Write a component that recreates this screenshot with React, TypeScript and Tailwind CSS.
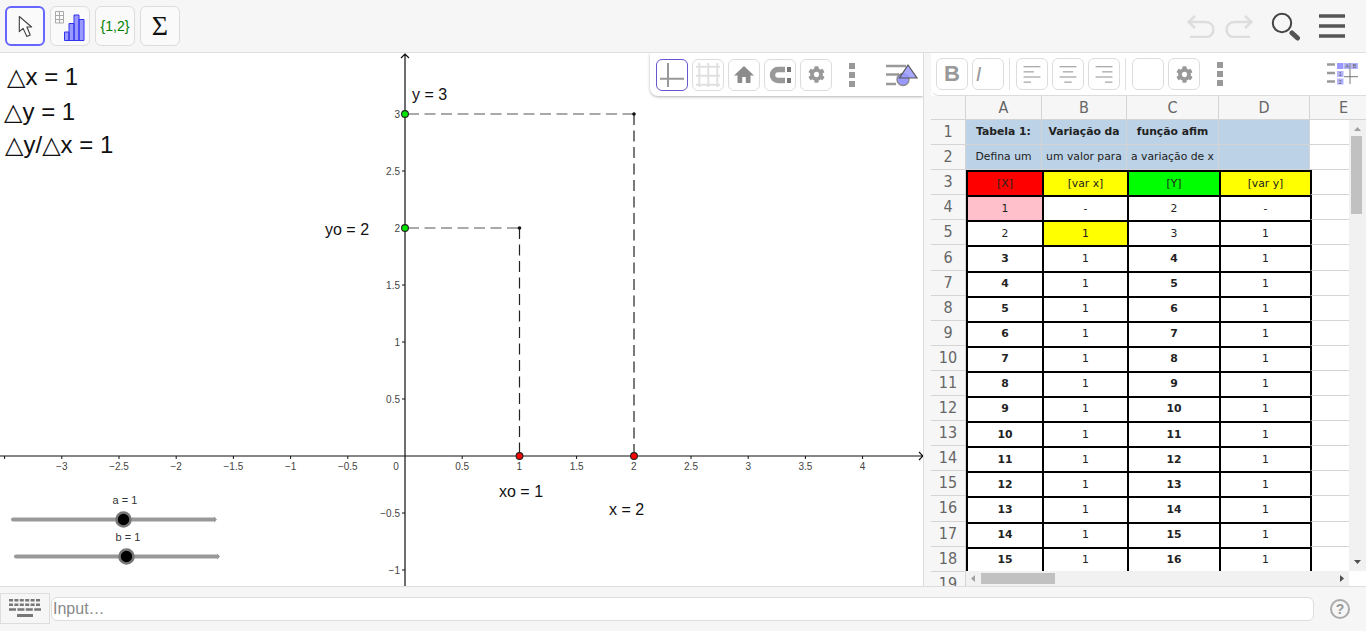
import { FaCog } from 'react-icons/fa';

const SANS = "[font-family:'Liberation_Sans',Arial,sans-serif]";

// spreadsheet rows 3..18, rows 6+ have the first and third column in bold
const rows: { a: string; b: string; c: string; d: string; bold?: boolean }[] = [
  { a: '1', b: '-', c: '2', d: '-' },
  { a: '2', b: '1', c: '3', d: '1' },
];
for (let n = 3; n <= 15; n++) {
  rows.push({ a: String(n), b: '1', c: String(n + 1), d: '1', bold: true });
}

function TopButton({ active, children }: { active?: boolean; children: React.ReactNode }) {
  return (
    <div
      className={
        active
          ? 'w-[40px] h-[40px] rounded-[6px] border-2 border-[#6666ff] bg-[#fafafa] flex items-center justify-center'
          : 'w-[40px] h-[40px] rounded-[6px] border border-[#dddddd] bg-[#fafafa] flex items-center justify-center'
      }
    >
      {children}
    </div>
  );
}

function StyleButton({ active, children }: { active?: boolean; children?: React.ReactNode }) {
  return (
    <div
      className={
        active
          ? 'w-[32px] h-[32px] shrink-0 rounded-[6px] border border-[#6557d2] bg-white flex items-center justify-center'
          : 'w-[32px] h-[32px] shrink-0 rounded-[6px] border border-[#dcdcdc] bg-white flex items-center justify-center'
      }
    >
      {children}
    </div>
  );
}

function Dots() {
  return (
    <div className="flex flex-col gap-[3px] w-[6px]">
      <div className="w-[6px] h-[6px] bg-[#999999]" />
      <div className="w-[6px] h-[6px] bg-[#999999]" />
      <div className="w-[6px] h-[6px] bg-[#999999]" />
    </div>
  );
}

function AlignIcon({ side }: { side: 'left' | 'center' | 'right' }) {
  const xs = (w: number) => (side === 'left' ? 7 : side === 'center' ? 16 - w / 2 : 25 - w);
  return (
    <svg width="32" height="32" viewBox="0 0 32 32">
      {[
        [7.5, 18],
        [13, 11],
        [18.5, 18],
        [24, 8],
      ].map(([y, w]) => (
        <rect key={y} x={xs(w)} y={y} width={w} height="1.4" fill="#aaaaaa" />
      ))}
    </svg>
  );
}

function GraphView() {
  const xTicks = [-3.5, -3, -2.5, -2, -1.5, -1, -0.5, 0.5, 1, 1.5, 2, 2.5, 3, 3.5, 4];
  const yTicks = [3, 2.5, 2, 1.5, 1, 0.5, -0.5, -1];
  const px = (v: number) => 405 + v * 114.4;
  const py = (v: number) => 456 - v * 114;
  const fmt = (v: number) => (v < 0 ? '\u2212' + Math.abs(v) : String(v));
  return (
    <svg width="923" height="533" viewBox="0 53 923 533" className={SANS}>
      {/* axes */}
      <path d="M0 456 H923 M919 452 L923 456 L919 460" fill="none" stroke="#111" strokeWidth="1.2" />
      <path d="M405 586 V54 M401 58 L405 54 L409 58" fill="none" stroke="#111" strokeWidth="1.2" />
      {xTicks.map((v) => (
        <line key={v} x1={px(v)} x2={px(v)} y1="456" y2="459" stroke="#111" />
      ))}
      {yTicks.map((v) => (
        <line key={v} x1="402" x2="405" y1={py(v)} y2={py(v)} stroke="#111" />
      ))}
      {xTicks
        .filter((v) => v !== -3.5)
        .map((v) => (
          <text key={v} x={px(v)} y="470" fontSize="10" fill="#444" textAnchor="middle">
            {fmt(v)}
          </text>
        ))}
      <text x="396" y="470" fontSize="10" fill="#444" textAnchor="middle">
        0
      </text>
      {yTicks.map((v) => (
        <text key={v} x="400" y={py(v) + 3.5} fontSize="10" fill="#444" textAnchor="end">
          {fmt(v)}
        </text>
      ))}

      {/* guide lines */}
      <g fill="none" strokeWidth="1.2" strokeDasharray="11 5.5">
        <path d="M408 114 H634" stroke="#555" />
        <path d="M408 228 H519.5" stroke="#555" />
        <path d="M634 114 V456" stroke="#222" />
        <path d="M519.5 228 V456" stroke="#222" />
      </g>
      <circle cx="634" cy="114" r="1.8" fill="#111" />
      <circle cx="519.5" cy="228" r="1.8" fill="#111" />

      {/* points */}
      <circle cx="405" cy="114" r="3.4" fill="#00e600" stroke="#222" strokeWidth="1.1" />
      <circle cx="405" cy="228" r="3.4" fill="#00e600" stroke="#222" strokeWidth="1.1" />
      <circle cx="519.5" cy="456" r="3.4" fill="#ff0000" stroke="#222" strokeWidth="1.1" />
      <circle cx="634" cy="456" r="3.4" fill="#ff0000" stroke="#222" strokeWidth="1.1" />

      {/* labels */}
      <g fontSize="16" fill="#111">
        <text x="412" y="100">y = 3</text>
        <text x="325" y="235">yo = 2</text>
        <text x="499" y="497">xo = 1</text>
        <text x="609" y="515">x = 2</text>
      </g>
      <g fontSize="24" fill="#111" className="[font-family:'Liberation_Sans','DejaVu_Sans',sans-serif]">
        <text x="7" y="85">△x = 1</text>
        <text x="4" y="120">△y = 1</text>
        <text x="5" y="153">△y/△x = 1</text>
      </g>

      {/* sliders */}
      <g>
        <text x="125" y="504" fontSize="11" fill="#333" textAnchor="middle">a = 1</text>
        <path d="M13 519.5 H214" stroke="#999" strokeWidth="4" strokeLinecap="round" />
        <path d="M214 516.5 L217 519.5 L214 522.5Z" fill="#999" />
        <circle cx="123.5" cy="519.5" r="7" fill="#000" stroke="#777" strokeWidth="2.6" />
        <text x="128" y="541" fontSize="11" fill="#333" textAnchor="middle">b = 1</text>
        <path d="M16 556.5 H217" stroke="#999" strokeWidth="4" strokeLinecap="round" />
        <path d="M217 553.5 L220 556.5 L217 559.5Z" fill="#999" />
        <circle cx="126.5" cy="556.5" r="7" fill="#000" stroke="#777" strokeWidth="2.6" />
      </g>
    </svg>
  );
}

function Spreadsheet() {
  const head =
    "flex items-center justify-center border-r border-b border-[#d4d4d4] bg-[#f6f6f6] text-[#666666] text-[16px] [font-family:'DejaVu_Sans_Condensed','DejaVu_Sans',sans-serif]";
  const light = 'flex items-center justify-center border-r border-b border-[#d4d4d4] text-[10.8px] text-[#222222]';
  const thick = 'flex items-center justify-center border-l-2 border-t-2 border-black text-[10.8px] text-[#222222]';
  const blue = 'bg-[#bcd2e6]';
  return (
    <div className="relative flex-1 overflow-hidden [font-family:'DejaVu_Sans',sans-serif]">
      <div className="grid grid-cols-[35px_76px_85px_92px_91px_68px] grid-rows-[24px] auto-rows-[25.1px]">
        <div className={head} />
        {['A', 'B', 'C', 'D', 'E'].map((c) => (
          <div key={c} className={head}>
            {c}
          </div>
        ))}

        <div className={head}>1</div>
        <div className={`${light} ${blue} font-bold`}>Tabela 1:</div>
        <div className={`${light} ${blue} font-bold`}>Variação da</div>
        <div className={`${light} ${blue} font-bold`}>função afim</div>
        <div className={`${light} ${blue}`} />
        <div className={light} />

        <div className={head}>2</div>
        <div className={`${light} ${blue}`}>Defina um</div>
        <div className={`${light} ${blue}`}>um valor para</div>
        <div className={`${light} ${blue}`}>a variação de x</div>
        <div className={`${light} ${blue}`} />
        <div className={light} />

        <div className={head}>3</div>
        <div className={`${thick} bg-[#ff0000]`}>[X]</div>
        <div className={`${thick} bg-[#ffff00]`}>[var x]</div>
        <div className={`${thick} bg-[#00ff00]`}>[Y]</div>
        <div className={`${thick} bg-[#ffff00]`}>[var y]</div>
        <div className="border-l-2 border-b border-l-black border-b-[#d4d4d4]" />

        {rows.map((r, i) => (
          <div key={i} className="contents">
            <div className={head}>{i + 4}</div>
            <div className={`${thick} ${i === 0 ? 'bg-[#ffc0cb]' : ''} ${r.bold ? 'font-bold' : ''}`}>{r.a}</div>
            <div className={`${thick} ${i === 1 ? 'bg-[#ffff00]' : ''}`}>{r.b}</div>
            <div className={`${thick} ${r.bold ? 'font-bold' : ''}`}>{r.c}</div>
            <div className={thick}>{r.d}</div>
            <div className="border-l-2 border-b border-l-black border-b-[#d4d4d4]" />
          </div>
        ))}
        <div className={head}>19</div>
      </div>

      {/* vertical scrollbar */}
      <div className="absolute right-0 top-[24px] w-[17px] h-[451px] bg-[#f1f1f1]">
        <svg className="absolute left-[4px] top-[6px]" width="9" height="6" viewBox="0 0 9 6">
          <path d="M4.5 1 L8 5 H1Z" fill="#a0a0a0" />
        </svg>
        <div className="absolute left-[2px] top-[16px] w-[11px] h-[78px] bg-[#c1c1c1]" />
        <svg className="absolute left-[4px] bottom-[6px]" width="9" height="6" viewBox="0 0 9 6">
          <path d="M1 1 H8 L4.5 5Z" fill="#505050" />
        </svg>
      </div>

      {/* horizontal scrollbar */}
      <div className="absolute left-[35px] top-[475px] w-[383px] h-[15px] bg-[#f1f1f1]">
        <svg className="absolute left-[4px] top-[4px]" width="6" height="7" viewBox="0 0 6 7">
          <path d="M5 0 V7 L1 3.5Z" fill="#a0a0a0" />
        </svg>
        <div className="absolute left-[15px] top-[2px] w-[74px] h-[11px] bg-[#c1c1c1]" />
        <svg className="absolute right-[4px] top-[4px]" width="6" height="7" viewBox="0 0 6 7">
          <path d="M1 0 V7 L5 3.5Z" fill="#505050" />
        </svg>
      </div>
      <div className="absolute left-[418px] top-[475px] w-[17px] h-[15px] bg-white" />
    </div>
  );
}

export default function App() {
  return (
    <div className="w-[1366px] h-[631px] overflow-hidden flex flex-col bg-[#f6f6f6]">
      {/* top toolbar */}
      <div className="h-[53px] shrink-0 flex items-center pl-[5px] pr-[21px] gap-[5px] border-b border-[#dedede] bg-[#f6f6f6]">
        <TopButton active>
          <svg width="38" height="38" viewBox="6 7 38 38">
            <path d="M19 16 V32 L23 28.5 L27 37 L30.5 35.5 L27 27 L32 27Z" fill="#fff" stroke="#444" strokeWidth="1.2" strokeLinejoin="round" />
          </svg>
        </TopButton>
        <TopButton>
          <svg width="38" height="38" viewBox="51 7 38 38">
            <path d="M55.5 11.5 H63.5 V23 H55.5Z M55.5 15.5 H63.5 M55.5 19.5 H63.5 M59.5 11.5 V23" fill="none" stroke="#aaa" />
            <path d="M64.5 32 H69 V40.5 H64.5Z M69 23.5 H74 V40.5 H69Z M74 15 H79 V40.5 H74Z M79 19.5 H84 V40.5 H79Z" fill="#9999ff" stroke="#3333ee" />
          </svg>
        </TopButton>
        <TopButton>
          <span className={`text-[14px] text-[#008000] ${SANS}`}>{'{1,2}'}</span>
        </TopButton>
        <TopButton>
          <span className="text-[28px] leading-none text-[#111] [font-family:'Liberation_Serif',serif]">Σ</span>
        </TopButton>
        <div className="ml-auto flex items-center">
          <svg width="28" height="24" viewBox="1187 15 28 24">
            <path d="M1195 17 L1188.5 23 L1195 29 M1188.5 23 H1206 a7.5 7.5 0 0 1 0 15 H1190" fill="none" stroke="#dddddd" strokeWidth="2.4" />
          </svg>
          <svg width="28" height="24" viewBox="1225 15 28 24" className="ml-[10px]">
            <path d="M1245 17 L1251.5 23 L1245 29 M1251.5 23 H1234 a7.5 7.5 0 0 0 0 15 H1250" fill="none" stroke="#dddddd" strokeWidth="2.4" />
          </svg>
          <svg width="32" height="32" viewBox="1269 10 32 32" className="ml-[16px]">
            <circle cx="1282" cy="23" r="9.2" fill="none" stroke="#444" strokeWidth="2" />
            <path d="M1292 33 L1297.5 38" stroke="#555" strokeWidth="5" strokeLinecap="round" />
          </svg>
          <svg width="26" height="24" viewBox="1319 14 26 24" className="ml-[18px]">
            <path d="M1319 16 H1345 M1319 26 H1345 M1319 36 H1345" stroke="#555" strokeWidth="3.4" />
          </svg>
        </div>
      </div>

      {/* panels */}
      <div className="h-[533px] shrink-0 flex">
        <div className="relative w-[924px] shrink-0 bg-white border-r border-[#dcdcdc] overflow-hidden">
          <GraphView />
          {/* graphics style bar */}
          <div className="absolute right-0 top-0 w-[273px] h-[43px] flex items-center gap-[4px] pl-[6px] bg-white rounded-bl-[8px] shadow-[0_1px_3px_rgba(0,0,0,0.3)]">
            <StyleButton active>
              <svg width="30" height="30" viewBox="657 59 30 30">
                <path d="M668 62 V86 M660 77.7 H684" stroke="#999" strokeWidth="2" />
              </svg>
            </StyleButton>
            <StyleButton>
              <svg width="30" height="30" viewBox="693 59 30 30">
                <path d="M699.3 62 V86 M708.3 62 V86 M717.3 62 V86 M696 65.7 H720 M696 74.7 H720 M696 83.7 H720" stroke="#e0e0e0" strokeWidth="2" />
              </svg>
            </StyleButton>
            <StyleButton>
              <svg width="30" height="30" viewBox="729 59 30 30">
                <path d="M744 65 L754 74.5 H750.5 V82 H745.8 V76 H742.2 V82 H737.5 V74.5 H734Z" fill="#8c8c8c" />
              </svg>
            </StyleButton>
            <StyleButton>
              <svg width="30" height="30" viewBox="765 59 30 30">
                <path d="M785 68.5 H778 a5.5 5.5 0 0 0 0 11 H785" fill="none" stroke="#999" strokeWidth="5.5" />
                <path d="M787 66 H791 V71 H787Z M787 77 H791 V82 H787Z" fill="#777" />
              </svg>
            </StyleButton>
            <StyleButton>
              <FaCog size={17} color="#999999" />
            </StyleButton>
            <div className="ml-[13px]">
              <Dots />
            </div>
            <svg width="34" height="26" viewBox="885 61 34 26" className="ml-[26px]">
              <path d="M886 65 H906 M886 73.5 H899 M886 83 H896" stroke="#999" strokeWidth="2.4" />
              <circle cx="903" cy="78.5" r="6" fill="#9999ff" stroke="#888" strokeWidth="1.4" />
              <path d="M908 64 L917 77 H899.5Z" fill="#9999ff" fillOpacity="0.85" stroke="#555" strokeWidth="1.2" />
            </svg>
          </div>
        </div>

        <div className="w-[7px] shrink-0 bg-[#f6f6f6]" />

        <div className="flex-1 min-w-0 flex flex-col bg-white">
          {/* spreadsheet style bar */}
          <div className="relative h-[43px] shrink-0 flex items-center gap-[4px] pl-[5px] bg-white rounded-bl-[8px] border-b border-[#dcdcdc]">
            <StyleButton>
              <span className={`text-[22px] leading-none font-bold text-[#999999] ${SANS}`}>B</span>
            </StyleButton>
            <StyleButton>
              <span className={`text-[20px] leading-none italic text-[#999999] mr-[19px] ${SANS}`}>I</span>
            </StyleButton>
            <div className="w-px h-[32px] bg-[#e0e0e0] ml-[1px] mr-[2px]" />
            <StyleButton><AlignIcon side="left" /></StyleButton>
            <StyleButton><AlignIcon side="center" /></StyleButton>
            <StyleButton><AlignIcon side="right" /></StyleButton>
            <div className="w-px h-[32px] bg-[#e0e0e0] ml-[1px] mr-[2px]" />
            <StyleButton />
            <StyleButton>
              <FaCog size={17} color="#999999" />
            </StyleButton>
            <div className="ml-[13px]">
              <Dots />
            </div>
            <svg width="32" height="24" viewBox="1327 62 32 24" className="ml-auto mr-[7px]">
              <path d="M1327 64.5 H1335 M1327 73 H1335 M1327 81.5 H1335" stroke="#999" strokeWidth="2.6" />
              <rect x="1337" y="63" width="6.5" height="6" fill="#9999ff" />
              <rect x="1344" y="63" width="6.5" height="6" fill="#b4b4ff" />
              <rect x="1351" y="63" width="7" height="6" fill="#b4b4ff" />
              <rect x="1337" y="71" width="6.5" height="6" fill="#b4b4ff" />
              <rect x="1337" y="78.5" width="6.5" height="6" fill="#b4b4ff" />
              <g fontSize="5.5" fill="#555" textAnchor="middle" className={SANS}>
                <text x="1347.2" y="68">A</text>
                <text x="1354.5" y="68">B</text>
                <text x="1340.2" y="76">1</text>
                <text x="1340.2" y="83.5">2</text>
              </g>
              <path d="M1350 63 V84 M1344 76.7 H1358" stroke="#777" strokeWidth="1" />
            </svg>
          </div>
          <Spreadsheet />
        </div>
      </div>

      {/* input bar */}
      <div className="flex-1 flex items-center gap-px pb-[1px] border-t border-[#dedede] bg-[#f6f6f6]">
        <div className="w-[50px] h-[31px] shrink-0 flex items-center justify-center border border-[#dddddd] bg-[#f6f6f6]">
          <svg width="34" height="22" viewBox="8 600 34 22">
            <path d="M9 602.3 H41 M9 606.8 H41" stroke="#777" strokeWidth="2.6" strokeDasharray="4 1.4" />
            <path d="M9 611.5 H41" stroke="#777" strokeWidth="2.6" strokeDasharray="7 1.4" />
            <path d="M17 617.5 H33" stroke="#777" strokeWidth="3" />
          </svg>
        </div>
        <div className={`w-[1263px] h-[24px] shrink-0 rounded-[6px] border border-[#dddddd] bg-white flex items-center pl-[1px] text-[16px] text-[#888888] ${SANS}`}>
          Input…
        </div>
        <div className="ml-[15px] w-[20px] h-[20px] shrink-0 rounded-full border-2 border-[#aaaaaa] flex items-center justify-center">
          <span className={`text-[14px] font-bold leading-none text-[#999999] ${SANS}`}>?</span>
        </div>
      </div>
    </div>
  );
}
